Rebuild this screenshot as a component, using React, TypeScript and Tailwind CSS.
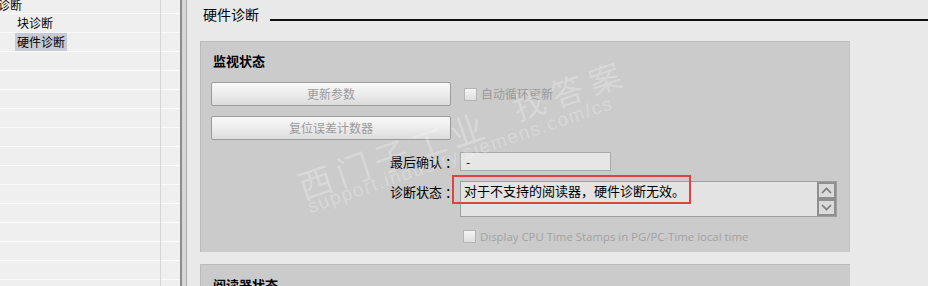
import React from "react";

const cjk = { fontFamily: '"Noto Sans CJK SC", "Noto Sans", sans-serif' };

function Checkbox() {
  return (
    <span className="inline-block w-[13px] h-[13px] border border-[#b4b4b4] bg-gradient-to-b from-[#f4f4f4] to-[#dedede] shrink-0" />
  );
}

function Btn({ label }: { label: string }) {
  return (
    <div className="w-[240px] h-[24px] border border-[#9c9c9c] rounded-[2px] bg-gradient-to-b from-[#f8f8f8] via-[#ececec] to-[#dcdcdc] flex items-center justify-center text-[12px] text-[#9a9a9a] leading-none">
      {label}
    </div>
  );
}

export default function App() {
  const rows = Array.from({ length: 14 });
  return (
    <div className="w-[928px] h-[286px] overflow-hidden flex bg-[#e9e9e9]" style={cjk}>
      {/* Sidebar */}
      <div className="w-[180px] h-full flex bg-[#efefef] shrink-0 overflow-hidden">
        <div className="w-[161px] h-full border-r border-[#d6d6d6] flex flex-col">
          <div className="h-[14px] shrink-0 border-b border-[#fbfbfb] flex items-end pb-[2px] text-[12px] leading-[12px] text-black -ml-[2px]">
            诊断
          </div>
          <div className="h-[19px] shrink-0 border-b border-[#fbfbfb] flex items-center pl-[17px] text-[12px] leading-[12px] text-black">
            块诊断
          </div>
          <div className="h-[19px] shrink-0 border-b border-[#fbfbfb] flex items-stretch pl-[15px] text-[12px] leading-[12px] text-black">
            <span className="bg-[#c6cad4] px-[2px] flex items-center">硬件诊断</span>
          </div>
          {rows.map((_, i) => (
            <div key={i} className="h-[19px] border-b border-[#fbfbfb] shrink-0" />
          ))}
        </div>
        <div className="flex-1 h-full flex flex-col">
          <div className="h-[14px] border-b border-[#fbfbfb] shrink-0" />
          {Array.from({ length: 16 }).map((_, i) => (
            <div key={i} className="h-[19px] border-b border-[#fbfbfb] shrink-0" />
          ))}
        </div>
      </div>
      {/* Splitter */}
      <div className="w-[2px] h-full bg-[#8c8c8c] shrink-0" />
      <div className="w-[4px] h-full bg-[#d6d6d6] shrink-0" />
      <div className="w-px h-full bg-[#ababab] shrink-0" />

      {/* Main */}
      <div className="flex-1 h-full relative pl-[13px]">
        <div className="flex items-end pt-[6px] pl-[3px]">
          <span className="text-[14px] leading-[17px] text-black">硬件诊断</span>
          <div className="flex-1 h-[2px] bg-[#111] ml-[11px] mb-[2px]" />
        </div>

        <div className="mt-[18px] w-[650px] h-[211px] bg-[#cbcbcb] border-t border-l border-[#bababa] border-r border-r-[#c4c4c4] relative pl-[10px] pt-[11px]">
          <div className="pl-[2px] text-[13px] leading-[15px] font-bold text-black">监视状态</div>

          <div className="mt-[14px] flex items-center">
            <Btn label="更新参数" />
            <div className="ml-[13px] flex items-center gap-[4px] text-[12px] text-[#9a9a9a]">
              <Checkbox />
              <span>自动循环更新</span>
            </div>
          </div>
          <div className="mt-[10px]">
            <Btn label="复位误差计数器" />
          </div>

          <div className="mt-[12px] flex items-center h-[19px]">
            <div className="w-[249px] flex justify-end text-[13px] text-black leading-none pr-[2px]">
              <span>最后确认</span>
              <span className="ml-[3px]">：</span>
            </div>
            <div className="w-[151px] h-[19px] bg-[#e6e6e6] border border-[#a9a9a9] text-[12px] text-black leading-[17px] pl-[5px]">-</div>
          </div>

          <div className="mt-[10px] flex items-start">
            <div className="w-[249px] flex justify-end text-[13px] text-black leading-none pt-[4px] pr-[2px]">
              <span>诊断状态</span>
              <span className="ml-[3px]">：</span>
            </div>
            <div className="w-[377px] h-[36px] bg-[#e3e3e3] border border-[#9f9f9f] flex">
              <div className="flex-1 text-[13px] text-black leading-[15px] pl-[3px] pt-[1px]">对于不支持的阅读器，硬件诊断无效。</div>
              <div className="w-[19px] flex flex-col">
                <div className="h-[17px] border-2 border-[#8f8f8f] bg-[#dadada] flex items-center justify-center">
                  <svg width="11" height="7" viewBox="0 0 11 7"><path d="M1 6 L5.5 1.5 L10 6" fill="none" stroke="#7a7a7a" strokeWidth="1.6" /></svg>
                </div>
                <div className="h-[17px] border-2 border-[#8f8f8f] bg-[#dadada] flex items-center justify-center">
                  <svg width="11" height="7" viewBox="0 0 11 7"><path d="M1 1 L5.5 5.5 L10 1" fill="none" stroke="#7a7a7a" strokeWidth="1.6" /></svg>
                </div>
              </div>
            </div>
          </div>

          <div className="mt-[13px] flex items-center pl-[252px] gap-[4px]">
            <Checkbox />
            <span className="text-[11.4px] text-[#a2a2a2] leading-none" style={{ fontFamily: '"Open Sans", "Liberation Sans", sans-serif' }}>
              Display CPU Time Stamps in PG/PC-Time local time
            </span>
          </div>

          {/* red highlight */}
          <div className="absolute left-[251px] top-[133px] w-[239px] h-[29px] border-2 border-[#e3403f]" />
        </div>

        <div className="mt-[12px] w-[650px] h-[40px] bg-[#cbcbcb] border-t border-l border-[#bababa] pl-[12px] pt-[12px]">
          <div className="text-[13px] leading-[15px] font-bold text-black">阅读器状态</div>
        </div>

        {/* watermark */}
        <div className="absolute left-[106px] top-[170px] origin-top-left -rotate-[19deg] pointer-events-none select-none whitespace-nowrap text-white/25 text-[34px] leading-[36px] tracking-[6px]">
          西门子工业
        </div>
        <div
          className="absolute left-[118px] top-[198px] origin-top-left -rotate-[19deg] pointer-events-none select-none whitespace-nowrap text-white/25 text-[19px] leading-[20px] tracking-[1.5px]"
          style={{ fontFamily: '"Liberation Sans", sans-serif' }}
        >
          support.industry.siemens.com/cs
        </div>
        <div className="absolute left-[321px] top-[92px] origin-top-left -rotate-[19deg] pointer-events-none select-none whitespace-nowrap text-white/25 text-[32px] leading-[34px] tracking-[8px]">
          找答案
        </div>
      </div>
    </div>
  );
}
